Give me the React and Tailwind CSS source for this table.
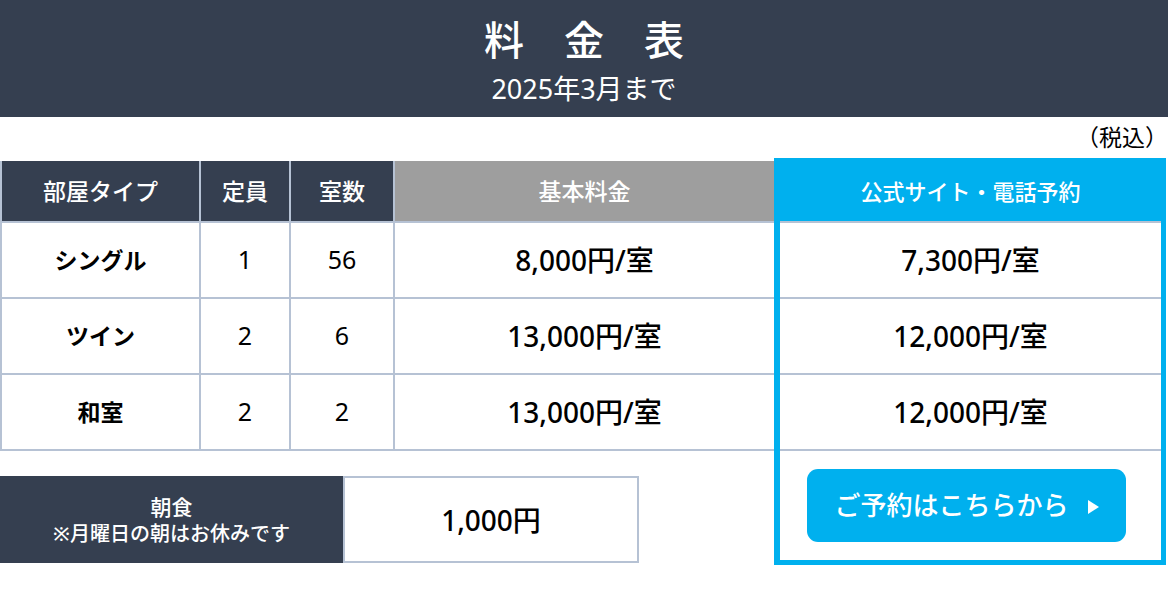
import React from 'react';

const rows = [
  { type: 'シングル', cap: '1', count: '56', base: '8,000円/室', web: '7,300円/室' },
  { type: 'ツイン', cap: '2', count: '6', base: '13,000円/室', web: '12,000円/室' },
  { type: '和室', cap: '2', count: '2', base: '13,000円/室', web: '12,000円/室' },
];

const line = 'border-[#b6c2d4]';

const App = () => {
  return (
    <div className="w-[1168px] h-[603px] bg-white text-black font-['Noto_Sans','Noto_Sans_CJK_JP',sans-serif] overflow-hidden">
      {/* タイトル */}
      <header className="h-[117px] bg-[#353f50] flex flex-col items-center justify-center text-white">
        <h1 className="flex gap-[40px] text-[40px] font-medium leading-none mt-[2px] font-['Noto_Sans_CJK_JP',sans-serif]">
          <span>料</span>
          <span>金</span>
          <span>表</span>
        </h1>
        <p className="text-[27px] leading-none mt-[17px] font-normal">2025年3月まで</p>
      </header>

      <div className="h-[41px] flex items-center justify-end text-[23px] leading-none">
        <span>（税込）</span>
      </div>

      <div className="flex">
        {/* 左側の表 */}
        <div className="w-[774px] pt-[3px]">
          <div className="flex h-[62px] text-white text-[23px] font-medium">
            <div className={`w-[201px] bg-[#353f50] border-l-2 border-r-2 border-b-2 ${line} flex items-center justify-center`}>部屋タイプ</div>
            <div className={`w-[90px] bg-[#353f50] border-r-2 border-b-2 ${line} flex items-center justify-center`}>定員</div>
            <div className={`w-[104px] bg-[#353f50] border-r-2 border-b-2 ${line} flex items-center justify-center`}>室数</div>
            <div className={`w-[379px] bg-[#9e9e9e] border-b-2 ${line} flex items-center justify-center`}>基本料金</div>
          </div>
          {rows.map((r) => (
            <div key={r.type} className="flex h-[76px]">
              <div className={`w-[201px] border-l-2 border-r-2 border-b-2 ${line} flex items-center justify-center text-[23px] font-bold`}>{r.type}</div>
              <div className={`w-[90px] border-r-2 border-b-2 ${line} flex items-center justify-center text-[25px]`}>{r.cap}</div>
              <div className={`w-[104px] border-r-2 border-b-2 ${line} flex items-center justify-center text-[25px]`}>{r.count}</div>
              <div className={`w-[379px] border-b-2 ${line} flex items-center justify-center text-[28px] font-medium`}>{r.base}</div>
            </div>
          ))}

          {/* 朝食 */}
          <div className="flex mt-[25px] h-[87px]">
            <div className="w-[343px] bg-[#353f50] text-white flex flex-col items-center justify-center">
              <span className="text-[21px] leading-[27px] font-medium">朝食</span>
              <span className="text-[20px] leading-[25px] font-medium">※月曜日の朝はお休みです</span>
            </div>
            <div className={`w-[296px] border-2 ${line} flex items-center justify-center text-[28px] font-medium`}>1,000円</div>
          </div>
        </div>

        {/* 公式サイト・電話予約 */}
        <div className="w-[392px] h-[407px] border-l-[6px] border-r-[5px] border-b-[5px] border-[#00b0ee] flex flex-col">
          <div className={`h-[65px] bg-[#00b0ee] border-b-2 ${line} flex items-center justify-center text-white text-[22px] font-medium pt-[3px]`}>
            公式サイト・電話予約
          </div>
          {rows.map((r) => (
            <div key={r.type} className={`h-[76px] border-b-2 ${line} flex items-center justify-center text-[28px] font-medium`}>{r.web}</div>
          ))}
          <div className="flex-1 flex items-center justify-center pr-[8px]">
            <button className="w-[319px] h-[73px] rounded-[11px] bg-[#00b0ee] text-white text-[26px] font-medium flex items-center justify-center gap-[19px]">
              <span>ご予約はこちらから</span>
              <svg width="11" height="14" viewBox="0 0 11 14" className="mt-[2px]">
                <polygon points="0,0 11,7 0,14" fill="white" />
              </svg>
            </button>
          </div>
        </div>
      </div>
    </div>
  );
};

export default App;
